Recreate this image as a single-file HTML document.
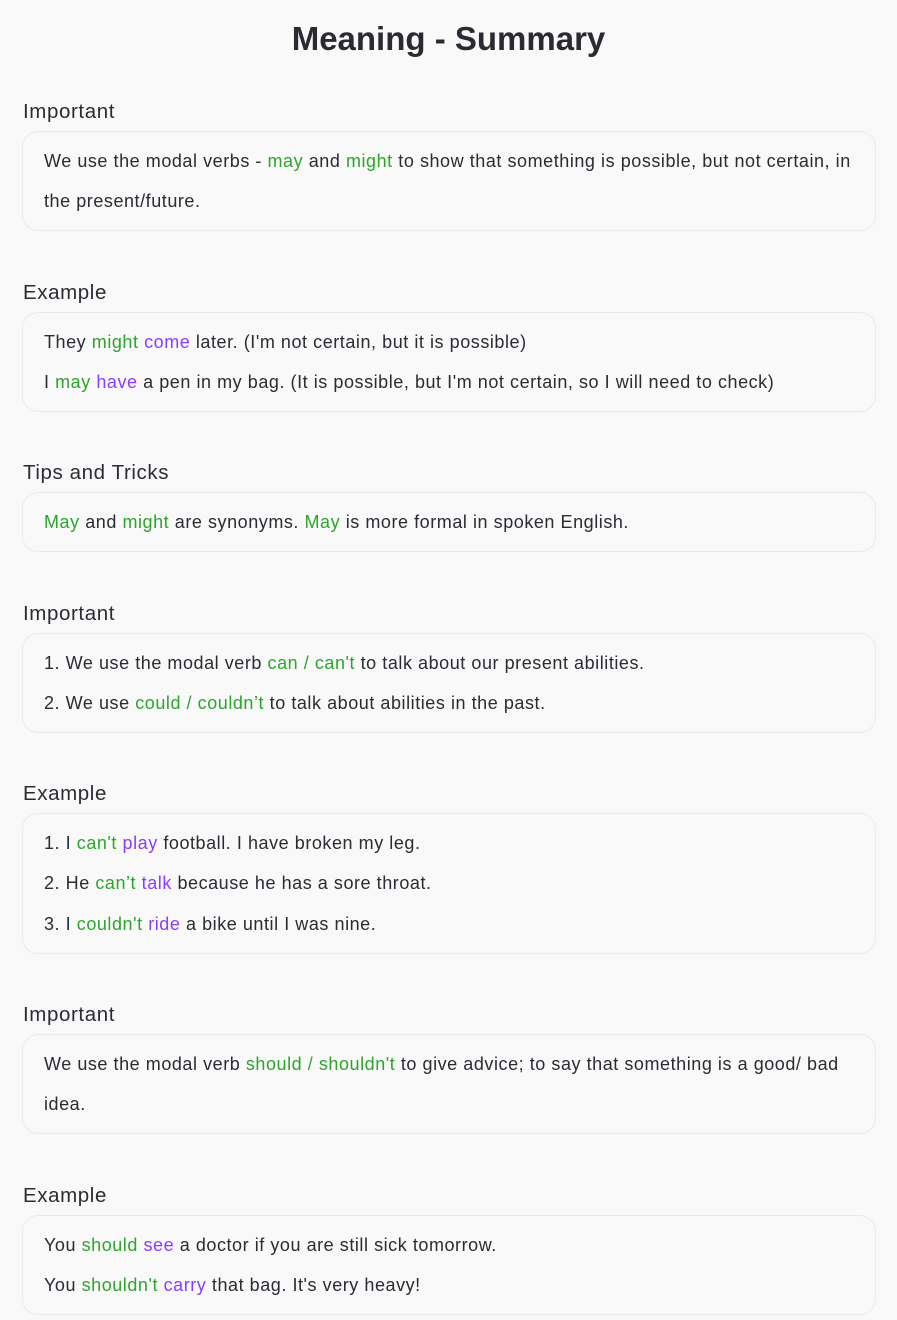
<!DOCTYPE html>
<html><head><meta charset="utf-8"><style>
body{margin:0;background:#f9f9f9;font-family:"Liberation Sans",sans-serif;color:#2b2b33;width:897px}
h1{margin:0;padding-top:19px;height:40px;line-height:40px;text-align:center;font-size:33px;font-weight:bold;color:#2a2a32}
h2{margin:0;font-size:20.5px;font-weight:normal;line-height:28px;height:28px;padding-left:23px;letter-spacing:0.6px;position:relative;top:1px}
.box{margin:6px 21px 0 22px;border:1px solid #ebebeb;border-radius:16px;padding:9px 20px 9px 21px;font-size:18px;letter-spacing:0.55px;line-height:40.2px}
.box p{margin:0}
.g{color:#2ca52c}.p{color:#8b3dff}
.s1{margin-top:38px}.s{margin-top:46.2px}
</style></head><body>
<h1>Meaning - Summary</h1>
<h2 class="s1">Important</h2>
<div class="box"><p>We use the modal verbs - <span class="g">may</span> and <span class="g">might</span> to show that something is possible, but not certain, in the present/future.</p></div>
<h2 class="s">Example</h2>
<div class="box"><p>They <span class="g">might</span> <span class="p">come</span> later. (I'm not certain, but it is possible)</p><p>I <span class="g">may</span> <span class="p">have</span> a pen in my bag. (It is possible, but I'm not certain, so I will need to check)</p></div>
<h2 class="s">Tips and Tricks</h2>
<div class="box"><p><span class="g">May</span> and <span class="g">might</span> are synonyms. <span class="g">May</span> is more formal in spoken English.</p></div>
<h2 class="s">Important</h2>
<div class="box"><p>1. We use the modal verb <span class="g">can / can't</span> to talk about our present abilities.</p><p>2. We use <span class="g">could / couldn’t</span> to talk about abilities in the past.</p></div>
<h2 class="s">Example</h2>
<div class="box"><p>1. I <span class="g">can't</span> <span class="p">play</span> football. I have broken my leg.</p><p>2. He <span class="g">can’t</span> <span class="p">talk</span> because he has a sore throat.</p><p>3. I <span class="g">couldn't</span> <span class="p">ride</span> a bike until I was nine.</p></div>
<h2 class="s">Important</h2>
<div class="box"><p>We use the modal verb <span class="g">should / shouldn't</span> to give advice; to say that something is a good/ bad idea.</p></div>
<h2 class="s">Example</h2>
<div class="box"><p>You <span class="g">should</span> <span class="p">see</span> a doctor if you are still sick tomorrow.</p><p>You <span class="g">shouldn't</span> <span class="p">carry</span> that bag. It's very heavy!</p></div>
</body></html>
